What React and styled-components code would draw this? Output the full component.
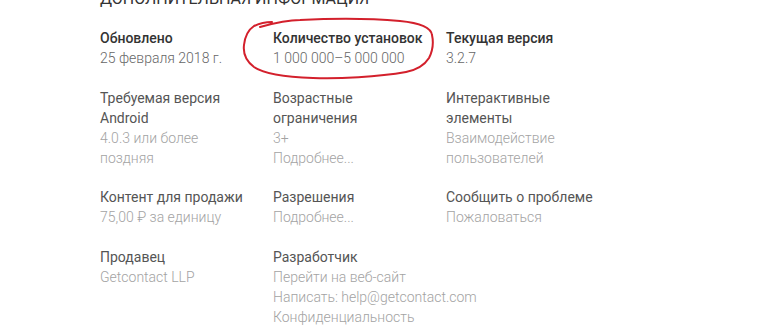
import React from 'react';
import styled, { createGlobalStyle } from 'styled-components';

const GlobalStyle = createGlobalStyle`
  body {
    margin: 0;
    background: #ffffff;
    font-family: Roboto, "Liberation Sans", Arial, sans-serif;
    overflow: hidden;
  }
`;

const Page = styled.div`
  position: relative;
  width: 770px;
  height: 330px;
  padding-left: 100px;
  box-sizing: border-box;
  overflow: hidden;
`;

const Heading = styled.h2`
  margin: -13px 0 17px;
  font-size: 16px;
  line-height: 24px;
  font-weight: 400;
  color: #333333;
  text-transform: uppercase;
`;

const Grid = styled.div`
  display: grid;
  grid-template-columns: repeat(3, 173px);
  row-gap: 19.5px;
`;

const Item = styled.div`
  display: flex;
  flex-direction: column;
  font-size: 14px;
  line-height: 20px;
`;

const Title = styled.div`
  font-weight: ${(p) => (p.$strong ? 500 : 400)};
  color: ${(p) => (p.$strong ? '#333333' : '#555555')};
  max-width: 150px;
`;

const Value = styled.div`
  font-weight: 300;
  color: ${(p) => (p.$dark ? '#666666' : '#a3a3a3')};
  max-width: 150px;
  white-space: ${(p) => (p.$nowrap ? 'nowrap' : 'normal')};
`;

const Marker = styled.svg`
  position: absolute;
  left: 238px;
  top: 16px;
  pointer-events: none;
`;

const items = [
  { title: 'Обновлено', values: ['25 февраля 2018 г.'], strong: true },
  { title: 'Количество установок', values: ['1 000 000–5 000 000'], strong: true },
  { title: 'Текущая версия', values: ['3.2.7'], strong: true },
  { title: 'Требуемая версия Android', values: ['4.0.3 или более поздняя'] },
  { title: 'Возрастные ограничения', values: ['3+', 'Подробнее...'] },
  { title: 'Интерактивные элементы', values: ['Взаимодействие пользователей'] },
  { title: 'Контент для продажи', values: ['75,00 ₽ за единицу'] },
  { title: 'Разрешения', values: ['Подробнее...'] },
  { title: 'Сообщить о проблеме', values: ['Пожаловаться'] },
  { title: 'Продавец', values: ['Getcontact LLP'] },
  {
    title: 'Разработчик',
    values: ['Перейти на веб-сайт', 'Написать: help@getcontact.com', 'Конфиденциальность', 'Istanbul, Turkey'],
    nowrap: true,
  },
];

const App = () => (
  <Page>
    <GlobalStyle />
    <Heading>Дополнительная информация</Heading>
    <Grid>
      {items.map((item) => (
        <Item key={item.title}>
          <Title $strong={item.strong}>{item.title}</Title>
          {item.values.map((v) => (
            <Value key={v} $dark={item.strong} $nowrap={item.nowrap}>
              {v}
            </Value>
          ))}
        </Item>
      ))}
    </Grid>
    <Marker width="205" height="70" viewBox="0 0 205 70">
      <path
        d="M22 11 C40 6 52 4 62 4 C100 2 140 3 162 5 C182 7 193 11 194 19 C196 28 194 36 191 42 C186 50 178 54 168 56 C140 61 100 63 75 62 C50 61 26 58 16 51 C8 45 5 37 6 29 C7 20 10 14 16 10 C22 7 28 6 34 6"
        fill="none"
        stroke="#d3202c"
        strokeWidth="2"
        strokeLinecap="round"
      />
    </Marker>
  </Page>
);

export default App;
